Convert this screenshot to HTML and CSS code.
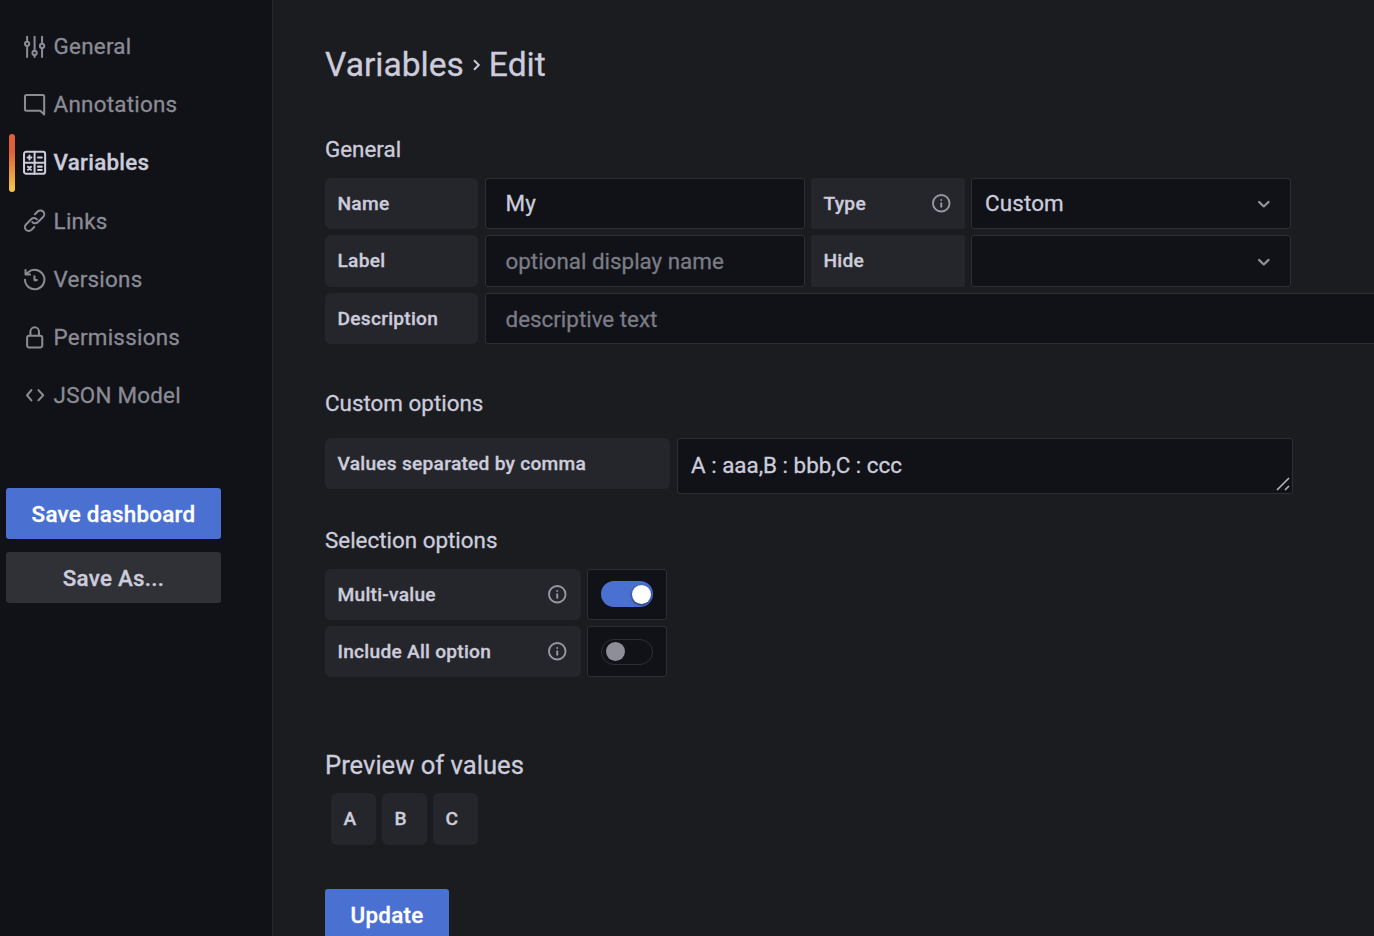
FILE: index.html
```html
<!DOCTYPE html>
<html lang="en">
<head>
<meta charset="utf-8">
<title>Variables - Edit</title>
<link rel="stylesheet" href="styles.css">
</head>
<body>
<svg class="defs" aria-hidden="true">
  <symbol id="info" viewBox="0 0 24 24"><circle cx="12" cy="12" r="9.700" fill="none" stroke="currentColor" stroke-width="2.2"/><path d="M12 12v4M12 8.2v.1" fill="none" stroke="currentColor" stroke-width="2.3" stroke-linecap="round"/></symbol>
  <symbol id="down" viewBox="0 0 24 24"><path d="M7.500 10.200l4.500 4.300 4.500-4.300" fill="none" stroke="currentColor" stroke-width="2" stroke-linecap="round" stroke-linejoin="round"/></symbol>
</svg>
<div class="page">
  <aside class="sidebar">
    <nav class="nav">
      <a class="nav-item"><svg class="icon" viewBox="0 0 24 24"><path d="M4.800 2.500v4.500M4.800 11.200V21.500M11.800 2.500v13.500M11.800 20v1.500M18.800 2.500v6.500M18.800 13.200v8.300"/><circle cx="4.800" cy="9.2" r="2"/><circle cx="11.800" cy="17.8" r="2"/><circle cx="18.800" cy="11.2" r="2"/></svg><span>General</span></a>
      <a class="nav-item"><svg class="icon" viewBox="0 0 24 24"><path d="M4.200 2.900H19.400A1.400 1.400 0 0 1 20.800 4.300V21L17.200 17.600H4.200A1.400 1.400 0 0 1 2.800 16.200V4.300A1.400 1.400 0 0 1 4.200 2.900Z"/></svg><span>Annotations</span></a>
      <a class="nav-item active"><svg class="icon" viewBox="0 0 24 24"><rect x="1.900" y="1.700" width="19.800" height="20.600" rx="2"/><path d="M11.800 1.700v20.600M1.900 12h19.800M5.200 7h3.600M7 5.200v3.600M15 7h3.600M5.600 15.700l2.800 2.800M8.400 15.700l-2.800 2.800M15 15.600h3.600M15 18.800h3.600"/></svg><span>Variables</span></a>
      <a class="nav-item"><svg class="icon" viewBox="0 0 24 24"><path d="M9.700 13.200a3.600 3.600 0 0 0 5.100 .2l5-5a3.600 3.600 0 0 0-5.100-5.100l-2.600 2.600M13.900 10.600a3.600 3.600 0 0 0-5.100-.2l-5 5a3.600 3.600 0 0 0 5.100 5.100l2.600-2.600"/></svg><span>Links</span></a>
      <a class="nav-item"><svg class="icon" viewBox="0 0 24 24"><path d="M2.800 12A9.100 9.100 0 1 0 5.600 5.200L3.700 7M3.300 2.800v4.300h4.300M11.700 8.600V12.300h2.200"/></svg><span>Versions</span></a>
      <a class="nav-item"><svg class="icon" viewBox="0 0 24 24"><path d="M6.600 10H17.200A1.800 1.800 0 0 1 19 11.800V19.200A1.800 1.800 0 0 1 17.200 21H6.600A1.800 1.800 0 0 1 4.800 19.200V11.800A1.800 1.800 0 0 1 6.600 10ZM7.900 10V6.200a4 4 0 0 1 8 0V10"/></svg><span>Permissions</span></a>
      <a class="nav-item"><svg class="icon" viewBox="0 0 24 24"><path d="M8.800 6.700L4.700 11.500l4.100 4.800M15.400 6.700l4.500 4.800-4.500 4.800"/></svg><span>JSON Model</span></a>
    </nav>
    <div class="actions">
      <button class="btn primary">Save dashboard</button>
      <button class="btn secondary">Save As...</button>
    </div>
  </aside>
  <main class="content">
    <h1 class="title"><span>Variables</span><svg class="crumb" viewBox="0 0 9 14"><path d="M2 2.300L6.800 7 2 11.700"/></svg><span>Edit</span></h1>

    <section class="general">
      <h2 class="heading">General</h2>
      <div class="row"><div class="label w-name">Name</div><div class="field w-input">My</div><div class="label square w-type">Type<svg class="info"><use href="#info"/></svg></div><div class="field select">Custom<svg class="chev"><use href="#down"/></svg></div></div>
      <div class="row tall"><div class="label w-name">Label</div><div class="field w-input hint">optional display name</div><div class="label square w-type">Hide</div><div class="field select"><svg class="chev"><use href="#down"/></svg></div></div>
      <div class="row"><div class="label w-name">Description</div><div class="field wide hint">descriptive text</div></div>
    </section>

    <section class="custom">
      <h2 class="heading">Custom options</h2>
      <div class="row"><div class="label w-values">Values separated by comma</div><div class="field area">A : aaa,B : bbb,C : ccc<svg class="grip" viewBox="0 0 14 14"><path d="M1 13L13 1M9 13l4-4"/></svg></div></div>
    </section>

    <section class="selection">
      <h2 class="heading">Selection options</h2>
      <div class="row"><div class="label w-switch">Multi-value<svg class="info"><use href="#info"/></svg></div><div class="switch-box"><div class="switch on"><i class="knob"></i></div></div></div>
      <div class="row"><div class="label w-switch">Include All option<svg class="info"><use href="#info"/></svg></div><div class="switch-box"><div class="switch"><i class="knob"></i></div></div></div>
    </section>

    <section class="preview">
      <h2 class="heading large">Preview of values</h2>
      <div class="chips"><span class="label chip">A</span><span class="label chip">B</span><span class="label chip">C</span></div>
    </section>
    <button class="btn primary update">Update</button>
  </main>
</div>
</body>
</html>
```
FILE: styles.css
```css
* { box-sizing: border-box; }
body { margin: 0; background: #1b1c20; color: #ccccdc; font: 400 22.4px/1.57 Roboto, sans-serif; letter-spacing: 0.15px; -webkit-text-stroke: 0.3px currentColor; }
h1, h2 { margin: 0; font-weight: 400; }
.defs { display: none; }
.page { display: flex; height: 936px; overflow: hidden; }

.sidebar { flex: none; width: 273px; border-right: 1px solid #25262a; background: #111217; padding-top: 17.6px; }
.nav { padding-left: 9px; }
.nav-item { position: relative; display: flex; align-items: center; gap: 6.4px; height: 58.2px; padding-left: 12.6px; color: #8b8b95; letter-spacing: 0.25px; }
.active { color: #ccccdc; font-weight: 500; }
.active::before { content: ""; position: absolute; left: 0; top: 0; width: 6px; height: 58px; border-radius: 3px; background: linear-gradient(#e0603a 30%, #f5cb48); }
.icon { width: 25.6px; height: 25.6px; fill: none; stroke: currentColor; stroke-width: 1.9; stroke-linecap: round; stroke-linejoin: round; }
.actions { display: flex; flex-direction: column; gap: 13px; padding: 63px 0 0 6px; }
.btn { height: 51px; width: 215px; padding: 1px 0 0; border: 0; border-radius: 3px; font: 500 22.4px/50px Roboto, sans-serif; letter-spacing: 0.25px; }
.primary { background: #4a71d2; color: #fff; }
.secondary { background: #303136; color: #ccccdc; }

.content { flex: 1; min-width: 0; padding: 38px 0 0 52px; overflow: hidden; }
.title { display: flex; align-items: center; height: 52px; padding-top: 2px; font-size: 33.6px; letter-spacing: 0; }
.crumb { width: 9px; height: 14px; margin: 0 8px 0 8px; fill: none; stroke: currentColor; stroke-width: 1.9; }
.heading { height: 36px; line-height: 36px; font-size: 22.4px; letter-spacing: 0; }
.row { display: flex; }
.label { flex: none; display: flex; align-items: center; justify-content: space-between; height: 51px; padding: 1px 14px 0 12.5px; border-radius: 6px; background: #25262b; font-size: 19.2px; font-weight: 500; letter-spacing: 0.24px; }
.square { border-radius: 3px; }
.field { flex: none; display: flex; align-items: center; height: 51px; border: 1px solid #2e2f34; border-radius: 3px; background: #111217; padding: 0 19.5px; }
.hint { color: #7b7c86; letter-spacing: 0; padding-top: 1px; }
.info { width: 20.5px; height: 20.5px; margin-bottom: 1px; color: #9898a5; }
.chev { width: 25.6px; height: 25.6px; margin-left: auto; color: #92929e; }

.general { padding-top: 41px; }
.general .heading { margin-bottom: 11px; }
.general .row { margin-bottom: 6px; }
.tall .field, .tall .label { height: 52px; }
.tall .label { padding-bottom: 0; padding-top: 0; }
.tall .select { padding-top: 1px; }
.w-name { width: 153px; margin-right: 7px; }
.w-input { width: 320px; margin-right: 6px; }
.w-type { width: 154px; margin-right: 6px; }
.select { width: 320px; padding: 0 13px; }
.wide { width: 960px; padding-top: 2px; }

.custom { padding-top: 35px; }
.custom .heading { margin-bottom: 17px; }
.w-values { width: 345px; margin-right: 7px; }
.area { position: relative; width: 616px; height: 56px; padding: 0 13px 1px; letter-spacing: 0; }
.grip { position: absolute; right: 2px; bottom: 2px; width: 14px; height: 14px; fill: none; stroke: #b5b5ba; stroke-width: 1.6; }

.selection { padding-top: 28px; }
.selection .heading { margin-bottom: 11px; }
.selection .row { margin-bottom: 6px; }
.w-switch { width: 256px; margin-right: 6px; }
.switch-box { display: grid; place-items: center; width: 80px; height: 51px; border: 1px solid #2e2f34; border-radius: 3px; background: #111217; }
.switch { display: flex; align-items: center; width: 52px; height: 26px; padding: 0 4px; border: 1px solid #2e2f34; border-radius: 13px; }
.on { justify-content: flex-end; margin-bottom: 1px; border: 0; padding: 0 2px; background: #4a71d2; }
.knob { width: 19px; height: 19px; border-radius: 50%; background: #8e8e99; }
.on .knob { background: #fff; box-shadow: 0 1px 3px #1b2c60; }

.preview { padding-top: 60px; }
.large { height: 44px; line-height: 44px; font-size: 25.6px; }
.preview .heading { margin-bottom: 6px; }
.chips { display: flex; gap: 6px; padding-left: 6px; }
.chip { width: 45px; height: 52px; padding-top: 0; }
.update { display: block; width: 124px; margin-top: 44px; }
```
